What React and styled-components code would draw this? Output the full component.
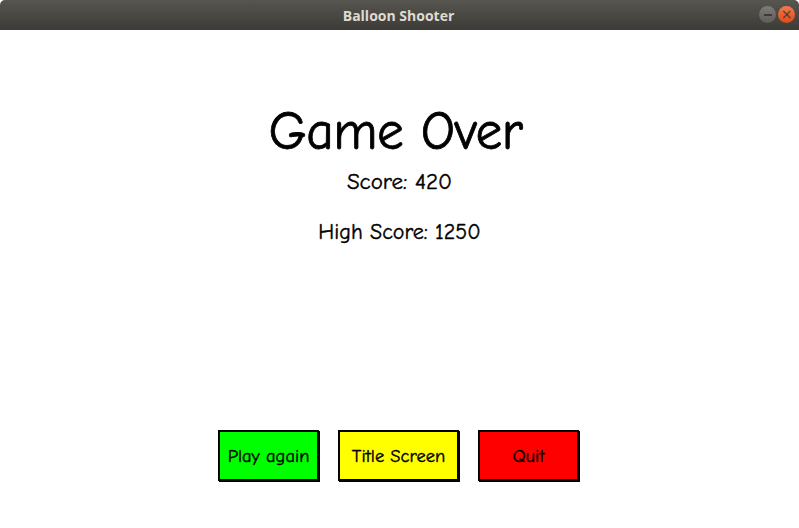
import React from 'react'
import styled, { createGlobalStyle } from 'styled-components'

const GlobalStyle = createGlobalStyle`
  html, body {
    margin: 0;
    padding: 0;
    background: #ffffff;
  }
`

const buttons = [
  { label: 'Play again', color: '#00ff00', width: 97 },
  { label: 'Title Screen', color: '#ffff00', width: 117 },
  { label: 'Quit', color: '#ff0000', width: 97 },
]

export default function App() {
  return (
    <>
      <GlobalStyle />
      <Window>
        <TitleBar>
          <TitleText>Balloon Shooter</TitleText>
          <Controls>
            <MinBtn><span /></MinBtn>
            <CloseBtn>×</CloseBtn>
          </Controls>
        </TitleBar>
        <Screen>
          <Heading>Game Over</Heading>
          <Line $top={5} $size={23}>Score: 420</Line>
          <Line $top={20} $size={22}>High Score: 1250</Line>
          <ButtonRow>
            {buttons.map(b => (
              <MenuButton key={b.label} $bg={b.color} $w={b.width}>{b.label}</MenuButton>
            ))}
          </ButtonRow>
        </Screen>
      </Window>
    </>
  )
}

const Window = styled.div`
  width: 799px;
  height: 528px;
  display: flex;
  flex-direction: column;
  overflow: hidden;
`

const TitleBar = styled.div`
  height: 30px;
  flex: none;
  display: flex;
  align-items: center;
  justify-content: center;
  position: relative;
  background: linear-gradient(#57554f, #3c3b37);
  border-radius: 5px 5px 0 0;
`

const TitleText = styled.div`
  font-family: "Open Sans", "DejaVu Sans", sans-serif;
  font-weight: 700;
  font-size: 14px;
  color: #dfdbd2;
  margin-left: -2px;
`

const Controls = styled.div`
  position: absolute;
  right: 4px;
  top: 6px;
  display: flex;
  gap: 2px;
`

const MinBtn = styled.div`
  width: 17px;
  height: 17px;
  border-radius: 50%;
  background: linear-gradient(#7d7c78, #5d5c58);
  display: flex;
  align-items: center;
  justify-content: center;
  span {
    width: 8px;
    height: 2px;
    background: #3c3b37;
  }
`

const CloseBtn = styled.div`
  width: 17px;
  height: 17px;
  border-radius: 50%;
  background: linear-gradient(#f07a4c, #df4a16);
  color: #3c3b37;
  font-family: "DejaVu Sans", sans-serif;
  font-size: 14px;
  line-height: 17px;
  text-align: center;
`

const Screen = styled.div`
  flex: 1;
  display: flex;
  flex-direction: column;
  align-items: center;
  background: #ffffff;
  color: #000000;
  font-family: "Comic Sans MS", "Comic Neue", "DejaVu Sans", sans-serif;
  -webkit-text-stroke: 0.4px #000;
  padding-top: 72px;
`

const Heading = styled.h1`
  margin: 0 0 0 -8px;
  font-size: 53.5px;
  font-weight: 400;
  line-height: 60px;
  letter-spacing: -0.5px;
  -webkit-text-stroke: 0.8px #000;
`

const Line = styled.div`
  font-size: ${p => p.$size}px;
  line-height: 30px;
  margin-top: ${p => p.$top}px;
`

const ButtonRow = styled.div`
  margin-top: 183px;
  display: flex;
  gap: 19px;
  margin-left: -2px;
`

const MenuButton = styled.div`
  width: ${p => p.$w}px;
  height: 47px;
  border: 2px solid #000;
  background: ${p => p.$bg};
  display: flex;
  align-items: center;
  justify-content: center;
  font-size: 18.5px;
  white-space: nowrap;
  box-shadow: 1px 1px 0 #000;
`
